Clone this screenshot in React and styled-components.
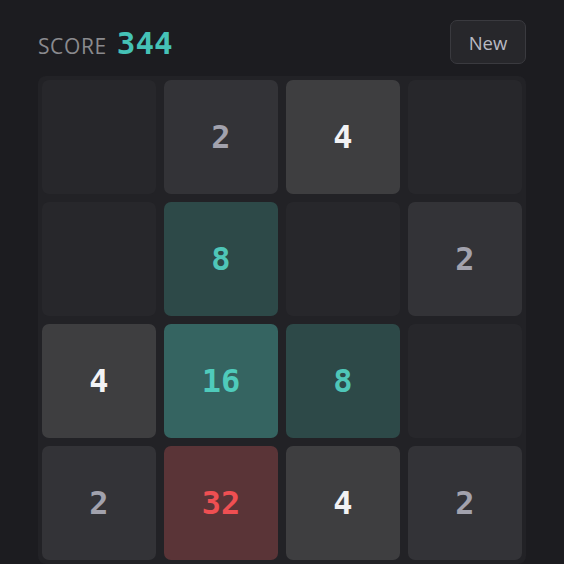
import React from "react";
import styled, { createGlobalStyle } from "styled-components";

const Global = createGlobalStyle`
  html, body { margin: 0; padding: 0; background: #1c1c20; }
  body { font-family: "Open Sans", "Noto Sans", sans-serif; overflow: hidden; }
`;

const Page = styled.div`
  width: 564px;
  height: 564px;
  box-sizing: border-box;
  padding: 20px 38px 0 38px;
  display: flex;
  flex-direction: column;
  gap: 12px;
`;

const Header = styled.div`
  display: flex;
  align-items: center;
  justify-content: space-between;
  height: 44px;
`;

const Score = styled.div`
  display: flex;
  align-items: baseline;
  gap: 10px;
  padding-top: 2px;
`;

const ScoreLabel = styled.span`
  font-size: 21px;
  color: #8a8a8e;
  letter-spacing: 0.6px;
`;

const ScoreValue = styled.span`
  font-family: "DejaVu Sans Mono", monospace;
  font-weight: bold;
  font-size: 31px;
  color: #45c2b6;
`;

const NewButton = styled.button`
  width: 76px;
  height: 44px;
  border-radius: 7px;
  border: 1.5px solid #3a3a3f;
  background: #27272b;
  color: #b9b9c2;
  font-family: "Open Sans", sans-serif;
  font-size: 18.5px;
  cursor: pointer;
`;

const Board = styled.div`
  display: grid;
  grid-template-columns: repeat(4, 114px);
  grid-auto-rows: 114px;
  gap: 8px;
  padding: 4px;
  background: #222226;
  border-radius: 8px;
`;

const styles = {
  0: { bg: "#27272b", fg: "transparent" },
  2: { bg: "#333337", fg: "#a2a2ad" },
  4: { bg: "#3e3e40", fg: "#f2f2f4" },
  8: { bg: "#2d4948", fg: "#4fc6b8" },
  16: { bg: "#356461", fg: "#4fcbbb" },
  32: { bg: "#5a3437", fg: "#ef4f52" },
};

const Tile = styled.div`
  border-radius: 7px;
  background: ${(p) => styles[p.$v].bg};
  color: ${(p) => styles[p.$v].fg};
  display: flex;
  align-items: center;
  justify-content: center;
  font-family: "DejaVu Sans Mono", monospace;
  font-weight: bold;
  font-size: 32px;
`;

const grid = [
  [0, 2, 4, 0],
  [0, 8, 0, 2],
  [4, 16, 8, 0],
  [2, 32, 4, 2],
];

export default function App() {
  return (
    <>
      <Global />
      <Page>
        <Header>
          <Score>
            <ScoreLabel>SCORE</ScoreLabel>
            <ScoreValue>344</ScoreValue>
          </Score>
          <NewButton>New</NewButton>
        </Header>
        <Board>
          {grid.flat().map((v, i) => (
            <Tile key={i} $v={v}>
              {v ? v : ""}
            </Tile>
          ))}
        </Board>
      </Page>
    </>
  );
}
